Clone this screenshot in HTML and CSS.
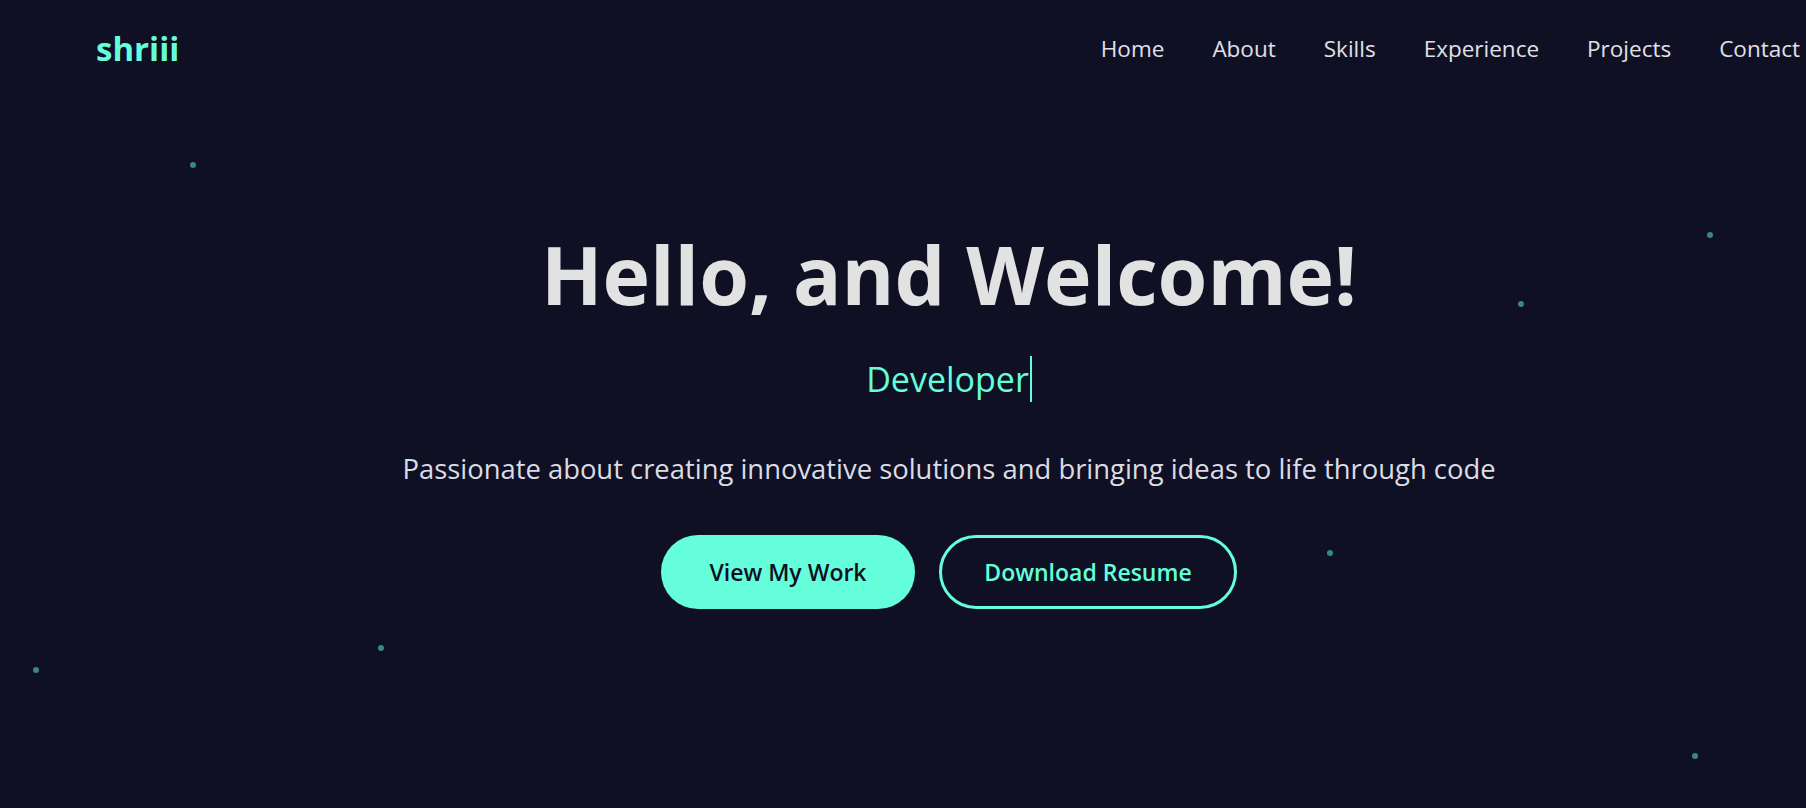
FILE: index.html
```html
<!DOCTYPE html>
<html lang="en">
<head>
<meta charset="utf-8">
<title>shriii</title>
<link rel="stylesheet" href="styles.css">
</head>
<body>
<div class="particles">
  <span class="dot" style="left:190px;top:162px"></span>
  <span class="dot" style="left:1707px;top:232px"></span>
  <span class="dot" style="left:1518px;top:301px"></span>
  <span class="dot" style="left:1327px;top:550px"></span>
  <span class="dot" style="left:378px;top:645px"></span>
  <span class="dot" style="left:33px;top:667px"></span>
  <span class="dot" style="left:1692px;top:753px"></span>
</div>
<header class="header">
  <a class="logo" href="#">shriii</a>
  <nav class="nav">
    <a href="#">Home</a>
    <a href="#">About</a>
    <a href="#">Skills</a>
    <a href="#">Experience</a>
    <a href="#">Projects</a>
    <a href="#">Contact</a>
  </nav>
</header>
<main class="hero">
  <h1 class="title">Hello, and Welcome!</h1>
  <p class="subtitle"><span class="typed">Developer</span></p>
  <p class="tagline">Passionate about creating innovative solutions and bringing ideas to life through code</p>
  <div class="actions">
    <a class="btn btn-primary" href="#">View My Work</a>
    <a class="btn btn-outline" href="#">Download Resume</a>
  </div>
</main>
</body>
</html>
```
FILE: styles.css
```css
* { box-sizing: border-box; }
html, body {
  margin: 0;
  padding: 0;
  height: 100%;
  overflow: hidden;
}
body {
  background: #0f1024;
  font-family: "Open Sans", "Noto Sans", sans-serif;
  color: #e2e2e2;
  position: relative;
}
a { text-decoration: none; color: inherit; }

.particles {
  position: absolute;
  inset: 0;
  pointer-events: none;
}
.dot {
  position: absolute;
  width: 6px;
  height: 6px;
  border-radius: 50%;
  background: #64ffda;
  opacity: 0.5;
}

.header {
  position: relative;
  height: 96px;
  display: flex;
  align-items: center;
  justify-content: space-between;
  padding: 0 6px 0 96px;
}
.logo {
  font-size: 33px;
  font-weight: 700;
  color: #64ffda;
}
.nav {
  display: flex;
  gap: 48px;
}
.nav a {
  font-size: 22.5px;
  color: #e0e0e6;
}

.hero {
  position: relative;
  display: flex;
  flex-direction: column;
  align-items: center;
  text-align: center;
  padding: 130px 0 0 92px;
}
.title {
  margin: 0;
  font-size: 80.5px;
  font-weight: 700;
  line-height: 96px;
  color: #e2e2e2;
}
.subtitle {
  margin: 32px 0 0;
  font-size: 34px;
  line-height: 50px;
  color: #64ffda;
}
.typed {
  border-right: 2px solid #64ffda;
  padding-right: 1px;
}
.tagline {
  margin: 46px 0 0;
  font-size: 27.4px;
  line-height: 38px;
  color: #dcdce4;
}
.actions {
  display: flex;
  gap: 24px;
  margin-top: 47px;
}
.btn {
  display: inline-flex;
  align-items: center;
  justify-content: center;
  height: 74px;
  border-radius: 37px;
  font-size: 23px;
  font-weight: 600;
}
.btn-primary {
  width: 254px;
  background: #64ffda;
  color: #0f1024;
}
.btn-outline {
  width: 298px;
  border: 3px solid #64ffda;
  color: #64ffda;
}
```
